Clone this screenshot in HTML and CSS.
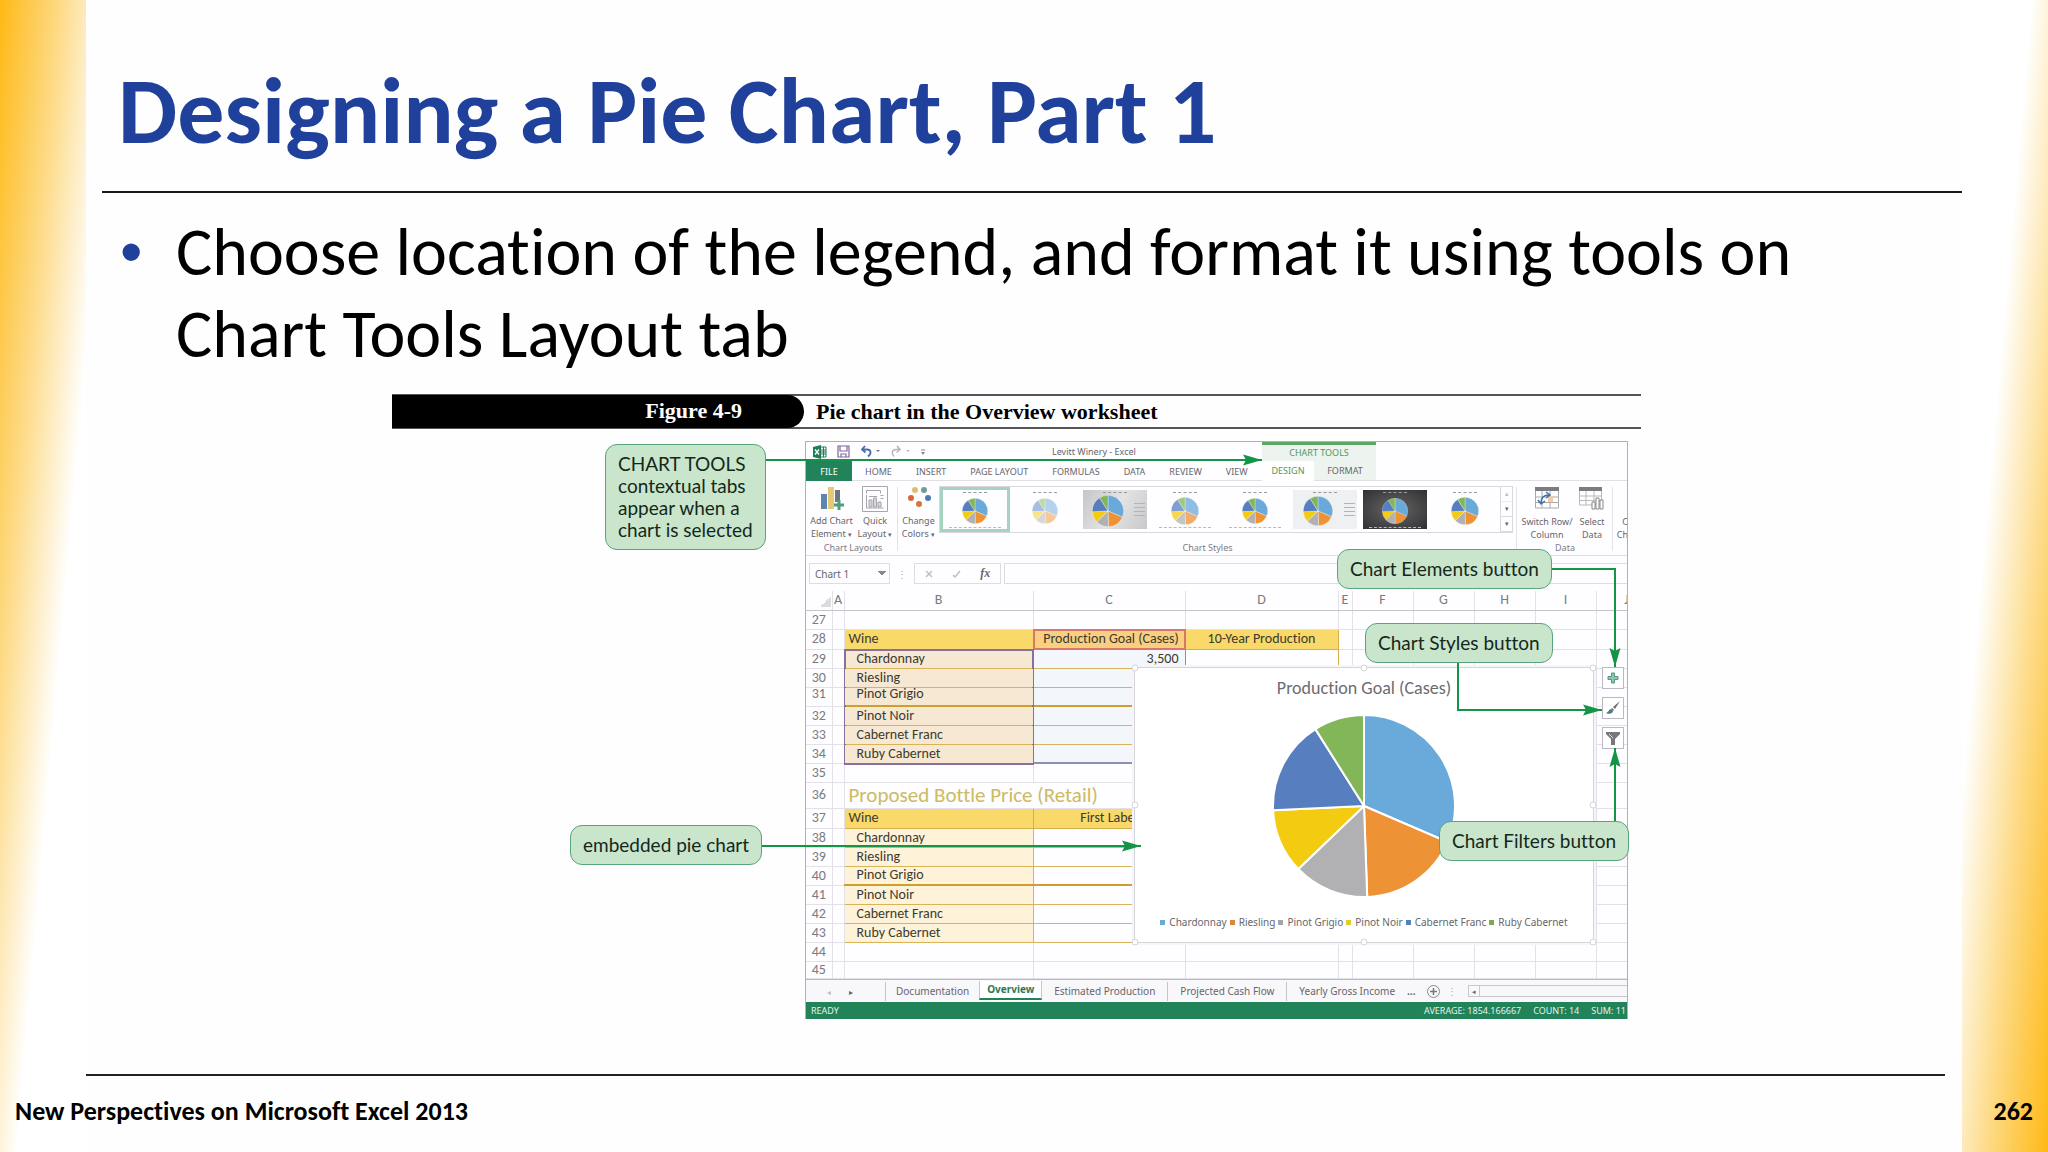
FILE: index.html
```html
<!DOCTYPE html>
<html lang="en">
<head>
    <meta charset="UTF-8">
    <meta name="viewport" content="width=device-width, initial-scale=1.0">
    <title>Designing a Pie Chart, Part 1</title>
    <link rel="stylesheet" href="styles.css">
</head>
<body>

    <!-- Shared pie drawing, used by the chart and the style thumbnails -->
    <svg class="defs" width="0" height="0" aria-hidden="true">
        <symbol id="pie" viewBox="-93 -93 186 186">
            <g stroke="#fff" stroke-width="2" stroke-linejoin="round">
                <path fill="#6aaadb" d="M0 0V-91A91 91 0 0 1 83.6 36Z"/>
                <path fill="#ee9236" d="M0 0L83.6 36A91 91 0 0 1 3.2 90.9Z"/>
                <path fill="#b1b1b3" d="M0 0L3.2 90.9A91 91 0 0 1 -65.7 63Z"/>
                <path fill="#f3cb10" d="M0 0L-65.7 63A91 91 0 0 1 -90.9 4.3Z"/>
                <path fill="#577fbf" d="M0 0L-90.9 4.3A91 91 0 0 1 -48.6 -76.9Z"/>
                <path fill="#83b658" d="M0 0L-48.6 -76.9A91 91 0 0 1 0 -91Z"/>
            </g>
        </symbol>
    </svg>

    <header class="slide-header">
        <h1>Designing a Pie Chart, Part 1</h1>
    </header>

    <main>
        <ul class="points">
            <li>Choose location of the legend, and format it using tools on Chart Tools Layout tab</li>
        </ul>

        <figure>
            <figcaption>
                <span class="figure-number">Figure 4-9</span>
                <span class="figure-title">Pie chart in the Overview worksheet</span>
            </figcaption>

            <div class="figure-body">
                <div class="excel">

                    <!-- Title bar and ribbon tabs -->
                    <div class="top">
                        <div class="top-left">
                            <div class="title-bar">
                                <div class="quick-access">
                                    <svg width="14" height="14" viewBox="0 0 14 14"><path fill="#fff" stroke="#1e7f56" d="M7 2h6v10H7z"/><path stroke="#1e7f56" d="M8 5h5M8 7h5M8 9h5M10.500 2v10"/><path fill="#1e7f56" d="M0 2l8-2v14l-8-2z"/><path stroke="#fff" stroke-width="1.300" d="M2 4.500l4 5M6 4.500l-4 5"/></svg>
                                    <svg width="13" height="13" viewBox="0 0 13 13"><path fill="none" stroke="#82669b" stroke-width="1.200" d="M1 1h11v11H1zM3 1v5h7V1M4 12V9h5v3"/></svg>
                                    <svg width="20" height="13" viewBox="0 0 20 13"><path fill="none" stroke="#4a6da8" stroke-width="1.800" d="M5 1L2 4.500L5.500 7.500M2 4.500h5c4 0 5 4 1 7"/><path fill="#777" d="M16 5h4l-2 2z"/></svg>
                                    <svg width="20" height="13" viewBox="0 0 20 13"><path fill="none" stroke="#b4b4bd" stroke-width="1.500" d="M7 1l3 3.500L6.500 7.500M10 4.500H6c-4 0-5 4-2 7"/><path fill="#bbb" d="M16 5h4l-2 2z"/></svg>
                                    <svg width="6" height="8" viewBox="0 0 6 8"><path stroke="#888" d="M1 2h4"/><path fill="#888" d="M1 4h4l-2 3z"/></svg>
                                </div>
                                <span class="file-name">Levitt Winery - Excel</span>
                            </div>
                            <nav class="tabs">
                                <button class="file">FILE</button>
                                <button>HOME</button>
                                <button>INSERT</button>
                                <button>PAGE LAYOUT</button>
                                <button>FORMULAS</button>
                                <button>DATA</button>
                                <button>REVIEW</button>
                                <button>VIEW</button>
                            </nav>
                        </div>
                        <div class="chart-tools">
                            <span>CHART TOOLS</span>
                            <nav class="tool-tabs">
                                <button class="active">DESIGN</button>
                                <button>FORMAT</button>
                            </nav>
                        </div>
                    </div>

                    <!-- Ribbon -->
                    <div class="ribbon">
                        <div class="group layouts">
                            <div class="group-items">
                                <button>
                                    <svg width="26" height="24" viewBox="0 0 26 24"><path fill="#5b86b4" d="M2 8h6v15H2z"/><path fill="#e6c878" d="M9 1h6v22H9z"/><path fill="#6c7680" d="M16 4h5v12h-5z"/><path stroke="#4f9c7a" stroke-width="3" d="M20 14v10M15 19h10"/></svg>
                                    <span>Add Chart<br>Element <small>▾</small></span>
                                </button>
                                <button>
                                    <svg width="26" height="26" viewBox="0 0 26 26"><g fill="none" stroke="#a5a5ad"><path d="M.5 .5h25v25H.5z"/><path d="M4.500 7.500v-3h14v3M7 10.500h8M4.500 9v13h17M18.500 9.500h3M18.500 12.500h3"/><path fill="#d5d5da" d="M7 14h3v7H7zM11.500 12h3v9h-3zM16 16h3v5h-3z"/></g></svg>
                                    <span>Quick<br>Layout <small>▾</small></span>
                                </button>
                            </div>
                            <div class="group-name">Chart Layouts</div>
                        </div>
                        <div class="group styles">
                            <div class="group-items">
                                <button>
                                    <svg width="24" height="24" viewBox="0 0 24 24"><circle cx="8" cy="4" r="3" fill="#d9c070"/><circle cx="17" cy="4" r="3" fill="#6f9d97"/><circle cx="4" cy="12" r="3" fill="#d5673f"/><circle cx="21" cy="12" r="3" fill="#4a7db5"/><circle cx="12" cy="18" r="3" fill="#d5743b"/></svg>
                                    <span>Change<br>Colors <small>▾</small></span>
                                </button>
                                <div class="gallery">
                                    <button class="thumb selected" aria-label="Style 1"><i></i><svg width="26" height="26"><use href="#pie"/></svg><b></b></button>
                                    <button class="thumb faded" aria-label="Style 2"><i></i><svg width="26" height="26"><use href="#pie"/></svg></button>
                                    <button class="thumb grey" aria-label="Style 3"><i></i><svg width="32" height="32"><use href="#pie"/></svg><em></em></button>
                                    <button class="thumb soft" aria-label="Style 4"><i></i><svg width="28" height="28"><use href="#pie"/></svg><b></b></button>
                                    <button class="thumb" aria-label="Style 5"><i></i><svg width="26" height="26"><use href="#pie"/></svg><b></b></button>
                                    <button class="thumb light" aria-label="Style 6"><i></i><svg width="30" height="30"><use href="#pie"/></svg><em></em></button>
                                    <button class="thumb dark" aria-label="Style 7"><i></i><svg width="26" height="26"><use href="#pie"/></svg><b></b></button>
                                    <button class="thumb" aria-label="Style 8"><i></i><svg width="28" height="28"><use href="#pie"/></svg></button>
                                    <div class="gallery-scroll">
                                        <button class="off">▴</button>
                                        <button>▾</button>
                                        <button>▾</button>
                                    </div>
                                </div>
                            </div>
                            <div class="group-name">Chart Styles</div>
                        </div>
                        <div class="group data">
                            <div class="group-items">
                                <button>
                                    <svg width="24" height="24" viewBox="0 0 24 24"><path fill="#7b7b80" d="M0 1h24v4H0z"/><path fill="none" stroke="#aaa" d="M.5 5v17h23V5M.5 11h23M.5 16.500h23M7 5v17M15 5v17"/><path fill="#f7c9a4" d="M13 10h5v6h-5z"/><path fill="none" stroke="#3d71a8" stroke-width="1.500" d="M6 17c0-5 3-8 8-8M11 6l4 3-4 3M3 14l3 4 4-3"/></svg>
                                    <span>Switch Row/<br>Column</span>
                                </button>
                                <button>
                                    <svg width="26" height="24" viewBox="0 0 26 24"><path fill="#7b7b80" d="M0 1h23v4H0z"/><path fill="none" stroke="#bbb" d="M.5 5v14h22V5M.5 10h22M.5 14.500h22M7 5v14M15 5v14"/><path fill="#fff" stroke="#888" d="M13 16h3v7h-3zM17 12h3v11h-3zM21 14h3v9h-3z"/></svg>
                                    <span>Select<br>Data</span>
                                </button>
                            </div>
                            <div class="group-name">Data</div>
                        </div>
                        <div class="group type">
                            <div class="group-items">
                                <button><span>C<br>Ch</span></button>
                            </div>
                        </div>
                    </div>

                    <!-- Formula bar -->
                    <div class="formula-bar">
                        <select aria-label="Name box"><option>Chart 1</option></select>
                        <span class="dots">⋮</span>
                        <div class="formula-buttons">
                            <button aria-label="Cancel"><svg width="8" height="8" viewBox="0 0 8 8"><path stroke="#bbb" stroke-width="1.300" d="M1 1l6 6M7 1L1 7"/></svg></button>
                            <button aria-label="Enter"><svg width="9" height="8" viewBox="0 0 9 8"><path fill="none" stroke="#bbb" stroke-width="1.300" d="M1 5l2 2 5-6"/></svg></button>
                            <button class="fx">fx</button>
                        </div>
                        <input type="text" aria-label="Formula">
                    </div>

                    <!-- Worksheet with the embedded chart -->
                    <div class="sheet">
                        <table>
                            <colgroup>
                                <col class="num"><col class="a"><col class="b"><col class="c"><col class="d"><col class="e"><col><col><col><col><col>
                            </colgroup>
                            <thead>
                                <tr><th class="corner"></th><th>A</th><th>B</th><th>C</th><th>D</th><th>E</th><th>F</th><th>G</th><th>H</th><th>I</th><th>J</th></tr>
                            </thead>
                            <tbody>
                                <tr><th>27</th><td></td><td></td><td></td><td></td><td></td><td></td><td></td><td></td><td></td><td></td></tr>
                                <tr class="head"><th>28</th><td></td><td class="gold">Wine</td><td class="gold series"><span class="range"></span>Production Goal (Cases)</td><td class="gold center">10-Year Production</td><td></td><td></td><td></td><td></td><td></td><td></td></tr>
                                <tr><th>29</th><td></td><td class="name picked first"><span class="range"></span>Chardonnay</td><td class="value picked">3,500</td><td class="edge"></td><td></td><td></td><td></td><td></td><td></td><td></td></tr>
                                <tr><th>30</th><td></td><td class="name picked">Riesling</td><td class="value picked"></td><td colspan="6"></td><td></td></tr>
                                <tr class="thick"><th class="raised">31</th><td></td><td class="name picked raised">Pinot Grigio</td><td class="value picked"></td><td colspan="6"></td><td></td></tr>
                                <tr><th>32</th><td></td><td class="name picked">Pinot Noir</td><td class="value picked"></td><td colspan="6"></td><td></td></tr>
                                <tr><th>33</th><td></td><td class="name picked">Cabernet Franc</td><td class="value picked"></td><td colspan="6"></td><td></td></tr>
                                <tr><th>34</th><td></td><td class="name picked">Ruby Cabernet</td><td class="value picked last"></td><td colspan="6"></td><td></td></tr>
                                <tr><th>35</th><td></td><td></td><td></td><td colspan="6"></td><td></td></tr>
                                <tr class="section"><th>36</th><td></td><td class="heading" colspan="2">Proposed Bottle Price (Retail)</td><td colspan="6"></td><td></td></tr>
                                <tr class="head"><th>37</th><td></td><td class="gold">Wine</td><td class="gold center">First Label</td><td colspan="6"></td><td></td></tr>
                                <tr><th>38</th><td></td><td class="name">Chardonnay</td><td class="value"></td><td colspan="6"></td><td></td></tr>
                                <tr><th>39</th><td></td><td class="name">Riesling</td><td class="value"></td><td colspan="6"></td><td></td></tr>
                                <tr class="thick"><th>40</th><td></td><td class="name">Pinot Grigio</td><td class="value"></td><td colspan="6"></td><td></td></tr>
                                <tr><th>41</th><td></td><td class="name">Pinot Noir</td><td class="value"></td><td colspan="6"></td><td></td></tr>
                                <tr><th>42</th><td></td><td class="name">Cabernet Franc</td><td class="value"></td><td colspan="6"></td><td></td></tr>
                                <tr><th>43</th><td></td><td class="name">Ruby Cabernet</td><td class="value"></td><td colspan="6"></td><td></td></tr>
                                <tr><th>44</th><td></td><td></td><td></td><td></td><td></td><td></td><td></td><td></td><td></td><td></td></tr>
                                <tr class="short"><th>45</th><td></td><td></td><td></td><td></td><td></td><td></td><td></td><td></td><td></td><td></td></tr>
                            </tbody>
                        </table>

                        <div class="chart">
                            <h3>Production Goal (Cases)</h3>
                            <svg width="186" height="186"><use href="#pie"/></svg>
                            <ul class="legend">
                                <li class="blue">Chardonnay</li>
                                <li class="orange">Riesling</li>
                                <li class="silver">Pinot Grigio</li>
                                <li class="yellow">Pinot Noir</li>
                                <li class="navy">Cabernet Franc</li>
                                <li class="green">Ruby Cabernet</li>
                            </ul>
                            <svg class="handles" width="100%" height="100%" fill="#fff" stroke="#d4d4da"><circle cx="0" cy="0" r="3"/><circle cx="50%" cy="0" r="3"/><circle cx="100%" cy="0" r="3"/><circle cx="0" cy="50%" r="3"/><circle cx="100%" cy="50%" r="3"/><circle cx="0" cy="100%" r="3"/><circle cx="50%" cy="100%" r="3"/><circle cx="100%" cy="100%" r="3"/></svg>
                        </div>

                        <div class="chart-buttons">
                            <button aria-label="Chart Elements"><svg width="12" height="12" viewBox="0 0 12 12"><path fill="#8fc4b0" stroke="#4f9a80" d="M4.500 1h3v3.500H11v3H7.500V11h-3V7.500H1v-3h3.500z"/></svg></button>
                            <button aria-label="Chart Styles"><svg width="15" height="14" viewBox="0 0 15 14"><path fill="#6d6d75" d="M14 0L7 6l2 2zM6 7l2 2-1 1-2-2z"/><path fill="#4d7a86" d="M5 8c-2 0-2 3-5 4 4 2 7 0 7-2z"/></svg></button>
                            <button aria-label="Chart Filters"><svg width="14" height="13" viewBox="0 0 14 13"><path fill="#77777d" d="M0 0h14v2L9 7v6H5V7L0 2z"/><path stroke="#ddd" d="M3 2l4 4"/></svg></button>
                        </div>
                    </div>

                    <!-- Sheet tabs -->
                    <div class="sheet-tabs">
                        <button class="arrow off" aria-label="Previous sheet">◂</button>
                        <button class="arrow" aria-label="Next sheet">▸</button>
                        <button class="tab first">Documentation</button>
                        <button class="tab current">Overview</button>
                        <button class="tab">Estimated Production</button>
                        <button class="tab line">Projected Cash Flow</button>
                        <button class="tab line">Yearly Gross Income</button>
                        <span class="more">...</span>
                        <button class="add" aria-label="New sheet"><svg width="13" height="13" viewBox="0 0 13 13"><circle cx="6.500" cy="6.500" r="6" fill="none" stroke="#888"/><path stroke="#777" stroke-width="1.500" d="M6.500 3v7M3 6.500h7"/></svg></button>
                        <span class="dots">⋮</span>
                        <div class="scroll"><button aria-label="Scroll left">◂</button></div>
                    </div>

                    <div class="status">
                        <span class="ready">READY</span>
                        <span>AVERAGE: 1854.166667</span>
                        <span>COUNT: 14</span>
                        <span>SUM: 11</span>
                    </div>
                </div>

                <!-- Connector lines between the callouts and the window -->
                <svg class="connectors" width="1250" height="580">
                    <defs>
                        <marker id="arrow" markerUnits="userSpaceOnUse" markerWidth="20" markerHeight="12" refX="19" refY="6" orient="auto">
                            <path fill="#149447" d="M0 0.500L19 6L0 11.500L3 6Z"/>
                        </marker>
                    </defs>
                    <g fill="none" stroke="#149447" stroke-width="2">
                        <path marker-end="url(#arrow)" d="M370 19H870"/>
                        <path marker-end="url(#arrow)" d="M1156 128H1223V226"/>
                        <path marker-end="url(#arrow)" d="M1066 220V269H1210"/>
                        <path marker-end="url(#arrow)" d="M1223 384V307"/>
                        <path marker-end="url(#arrow)" d="M366 405H749"/>
                    </g>
                </svg>
                <p class="callout tools-note">CHART TOOLS<br>contextual tabs<br>appear when a<br>chart is selected</p>
                <p class="callout pie-note">embedded pie chart</p>
                <p class="callout elements-note">Chart Elements button</p>
                <p class="callout styles-note">Chart Styles button</p>
                <p class="callout filters-note">Chart Filters button</p>
            </div>
        </figure>
    </main>

    <footer>
        <span>New Perspectives on Microsoft Excel 2013</span>
        <span>262</span>
    </footer>

</body>
</html>
```
FILE: styles.css
```css
* {
    box-sizing: border-box;
}

/* Slide with a gold fade down each side */
body {
    margin: 0;
    min-height: 100vh;
    display: flex;
    flex-direction: column;
    font-family: Calibri, Carlito, 'Lato', sans-serif;
    font-variant-ligatures: none;
    color: #000;
    background:
        linear-gradient(95deg, #ffb914, #fddc8c 34%, #fff 63%) left / 86px 100% no-repeat,
        linear-gradient(275deg, #ffb914, #fddc8c 34%, #fff 63%) right / 86px 100% no-repeat,
        #fefefe;
}

button, select, input {
    font: inherit;
    color: inherit;
    background: none;
    border: none;
    padding: 0;
    margin: 0;
}

.defs {
    position: absolute;
}

/* Slide title */
.slide-header {
    margin: 0 86px 0 102px;
    padding: 57px 18px 0 16px;
    height: 193px;
    border-bottom: 2px solid #1a1a1a;
}

h1 {
    margin: 0;
    font-size: 94px;
    line-height: 108px;
    font-weight: bold;
    color: #1f409b;
}

main {
    flex: 1;
}

/* Bullet list */
.points {
    margin: 0 200px 0 120px;
    padding: 18px 0 0;
    list-style: none;
    font-size: 68px;
    line-height: 82px;
}

.points li {
    display: flex;
}

.points li::before {
    content: "•";
    flex: 0 0 56px;
    font-family: 'Liberation Sans', sans-serif;
    font-size: 64px;
    color: #1f409b;
}

/* Figure */
figure {
    margin: 19px 407px 0 392px;
}

figcaption {
    display: flex;
    height: 35px;
    border-top: 2px solid #55555a;
    border-bottom: 2px solid #55555a;
    font-family: 'Liberation Serif', serif;
    font-size: 22px;
    line-height: 32px;
    font-weight: bold;
}

.figure-number {
    width: 412px;
    padding-right: 62px;
    margin: -1px 0;
    background: #000;
    color: #fff;
    text-align: right;
    border-radius: 0 17px 17px 0;
}

.figure-title {
    padding-left: 12px;
}

.figure-body {
    position: relative;
    margin-top: 12px;
    padding: 0 13px 0 413px;
}

/* Excel window */
.excel {
    border: 1px solid #b0b0b8;
    border-bottom: none;
    overflow: hidden;
    background: #fefdff;
    font-family: 'Noto Sans', sans-serif;
    font-size: 10px;
    color: #66666c;
}

.top {
    display: flex;
    height: 39px;
    border-bottom: 1px solid #e0e0e4;
    font-size: 9px;
    white-space: nowrap;
}

.top-left {
    flex: 0 0 456px;
}

.title-bar {
    display: flex;
    align-items: center;
    height: 19px;
}

.quick-access {
    display: flex;
    align-items: center;
    gap: 10px;
    width: 246px;
    padding-left: 7px;
}

.tabs {
    display: flex;
    gap: 24px;
    height: 20px;
}

.tabs .file {
    width: 46px;
    margin-right: -11px;
    background: #22825a;
    color: #fff;
}

.chart-tools {
    width: 114px;
    background: #edf3ef;
    border-top: 3px solid #5ba565;
    color: #4b9a5c;
    text-align: center;
    line-height: 16px;
}

.chart-tools span {
    display: block;
}

.tool-tabs {
    display: flex;
    height: 20px;
}

.tool-tabs button {
    flex: 1 0 auto;
    color: #66666c;
}

.tool-tabs .active {
    flex: 0 0 52px;
    background: #fff;
    color: #4b9a5c;
}

/* Ribbon */
.ribbon {
    display: flex;
    height: 75px;
    border-bottom: 1px solid #dcdce2;
    font-size: 9px;
    line-height: 13px;
}

.group {
    flex: none;
    display: flex;
    flex-direction: column;
    padding-top: 5px;
    position: relative;
    white-space: nowrap;
}

.group::after {
    content: "";
    position: absolute;
    right: 0;
    top: 6px;
    height: 64px;
    border-right: 1px solid #e4e4e8;
}

.group-items {
    display: flex;
    height: 55px;
}

.group-items > button {
    flex: none;
    display: flex;
    flex-direction: column;
    align-items: center;
    justify-content: space-between;
}

.group small {
    font-size: 7px;
}

.group-name {
    text-align: center;
    color: #7c7c84;
}

.layouts {
    width: 92px;
    padding-left: 2px;
}

.layouts button {
    width: 47px;
}

.layouts button + button {
    width: 40px;
}

.styles {
    width: 619px;
}

.styles .group-items > button {
    width: 41px;
}

.gallery {
    display: flex;
    width: 574px;
    height: 47px;
    border: 1px solid #d8d8de;
}

.thumb {
    position: relative;
    display: flex;
    align-items: center;
    justify-content: center;
    flex: 0 0 64px;
    height: 39px;
    margin: 3px;
    padding-top: 3px;
}

/* Faint title and legend strips */
.thumb i, .thumb b, .thumb em {
    position: absolute;
    top: 2px;
    left: 20px;
    right: 20px;
    border-top: 1px dashed #999;
}

.thumb b {
    top: auto;
    bottom: 1px;
    left: 6px;
    right: 6px;
    border-top: 1px dashed #bbb;
}

.thumb em {
    top: 13px;
    left: 51px;
    right: 2px;
    height: 16px;
    border: none;
    background: repeating-linear-gradient(#b4b4b8 0 1px, transparent 1px 4px);
}

.thumb.selected {
    outline: 3px solid #a5d3c0;
}

.thumb.faded svg {
    opacity: 0.5;
}

.thumb.soft svg {
    opacity: 0.75;
}

.thumb.grey {
    background: linear-gradient(120deg, #c5c5c7, #e4e4e5 50%, #c8c8ca);
}

.thumb.grey svg, .thumb.light svg {
    margin-right: 14px;
}

.thumb.light {
    background: #eff0f1;
}

.thumb.dark {
    background: radial-gradient(#666, #303033);
}

.gallery-scroll {
    display: flex;
    flex-direction: column;
    flex: 1;
    border-left: 1px solid #d8d8de;
}

.gallery-scroll button {
    flex: 1;
    font-size: 7px;
    line-height: 14px;
    border-bottom: 1px solid #d8d8de;
}

.off {
    opacity: 0.4;
}

.data {
    width: 96px;
}

.data button {
    width: 60px;
}

.data button + button {
    width: 30px;
}

.type .group-items > button {
    align-items: flex-end;
    justify-content: flex-end;
    width: 15px;
    text-align: right;
}

/* Formula bar */
.formula-bar {
    display: flex;
    align-items: center;
    height: 35px;
    padding: 0 0 0 3px;
}

.formula-bar select {
    appearance: none;
    width: 81px;
    height: 21px;
    padding-left: 5px;
    border: 1px solid #dcdce2;
    background: linear-gradient(45deg, transparent 50%, #888 50%) 68px 7px / 4px 4px no-repeat,
        linear-gradient(-45deg, transparent 50%, #888 50%) 72px 7px / 4px 4px no-repeat;
}

.dots {
    width: 24px;
    text-align: center;
    color: #aaa;
}

.formula-buttons {
    display: flex;
    justify-content: space-around;
    align-items: center;
    width: 87px;
    height: 21px;
    border: 1px solid #dcdce2;
}

.fx {
    font-family: 'Liberation Serif', serif;
    font-size: 12px;
    font-style: italic;
    font-weight: bold;
}

.formula-bar input {
    flex: 1;
    height: 21px;
    margin-left: 3px;
    border: 1px solid #dcdce2;
    border-right: none;
}

/* Worksheet grid */
.sheet {
    position: relative;
    height: 388px;
    overflow: hidden;
}

table {
    width: 851px;
    table-layout: fixed;
    border-collapse: collapse;
    font-family: Calibri, Carlito, 'Lato', sans-serif;
    font-size: 14px;
    line-height: 16px;
    color: #3c3a30;
}

col { width: 61px; }
col.num { width: 26px; }
col.a { width: 12px; }
col.b { width: 189px; }
col.c { width: 152px; }
col.d { width: 153px; }
col.e { width: 14px; }

tr { height: 19px; }
tr.head { height: 20px; }
tr.section { height: 26px; }
tr.short { height: 17px; }

th, td {
    position: relative;
    padding: 0;
    border: 1px solid #e3e1e8;
    white-space: nowrap;
}

th {
    font-weight: normal;
    color: #7a7a80;
    border-left: none;
}

thead th {
    height: 19px;
    border-top: none;
    border-bottom-color: #c4c4ca;
    font-size: 14px;
}

.corner {
    background: linear-gradient(135deg, transparent 50%, #dcdce0 50%) 14px 5px / 11px 11px no-repeat;
}

.gold {
    padding-left: 4px;
    background: #f8d969;
    border-color: #d5b04a;
}

.gold.center {
    padding-left: 0;
    text-align: center;
}

.gold.series {
    background: #f8d080;
    text-align: center;
}

.name {
    padding-left: 12px;
    background: #fef2d8;
    border-color: #d9b35a;
}

.name.picked {
    background: #f6e8d3;
}

.raised {
    line-height: 12px;
    vertical-align: top;
}

.value {
    padding-right: 6px;
    text-align: right;
    border-color: #d9b35a;
}

.value.picked {
    background: #f3f6fa;
    border-right-color: #8090c8;
}

.value.last {
    border-bottom: 2px solid #8d8fb0;
}

.edge {
    border-right-color: #d5b04a;
}

.thick .name, .thick .value {
    border-bottom: 2px solid #cf9f2c;
}

.heading {
    padding-left: 4px;
    font-size: 21px;
    line-height: 24px;
    color: #cbbb62;
}

/* Range outlines drawn around the chart's source cells */
.range {
    position: absolute;
    inset: -1px;
    border: 2px solid #d9756a;
}

.first .range {
    bottom: auto;
    height: 116px;
    border-color: #86709c;
}

/* Embedded chart */
.chart {
    position: absolute;
    left: 328px;
    top: 76px;
    width: 460px;
    height: 276px;
    background: #fff;
    border: 1px solid #d4d4da;
    box-shadow: 0 0 0 2px #f6f6f8;
    text-align: center;
}

.chart h3 {
    margin: 10px 0 14px;
    font-family: Calibri, Carlito, 'Lato', sans-serif;
    font-size: 18px;
    line-height: 21px;
    font-weight: normal;
    color: #6c6c70;
}

.chart svg {
    display: block;
    margin: 0 auto;
}

.chart .handles {
    position: absolute;
    inset: 0;
    overflow: visible;
}

.legend {
    display: flex;
    justify-content: center;
    gap: 3px;
    margin: 15px 0 0;
    padding: 0;
    list-style: none;
    font-size: 10px;
    line-height: 16px;
}

.legend li::before {
    content: "";
    display: inline-block;
    width: 5px;
    height: 5px;
    margin: 0 4px 1px 0;
    background: currentColor;
}

.blue::before { color: #6aaadb; }
.orange::before { color: #dd8638; }
.silver::before { color: #a5a5a8; }
.yellow::before { color: #e3cb2b; }
.navy::before { color: #577fbf; }
.green::before { color: #83a658; }

.chart-buttons {
    position: absolute;
    left: 796px;
    top: 76px;
    display: flex;
    flex-direction: column;
    gap: 8px;
}

.chart-buttons button {
    display: flex;
    align-items: center;
    justify-content: center;
    width: 22px;
    height: 22px;
    background: #fff;
    border: 1px solid #bdb9c4;
}

/* Sheet tabs */
.sheet-tabs {
    display: flex;
    align-items: center;
    height: 23px;
    border-top: 1px solid #b8b8c0;
    background: #f8f7fa;
    white-space: nowrap;
}

.arrow {
    width: 22px;
    margin-left: 12px;
    font-size: 8px;
}

.arrow + .arrow {
    margin: 0 23px 0 0;
}

.tab {
    height: 19px;
    padding: 0 12px;
}

.tab.first, .tab.line {
    border-left: 1px solid #c4c4ca;
}

.tab.first {
    padding: 0 10px;
}

.tab.current {
    margin-top: -2px;
    padding: 0 7px;
    background: #fff;
    border: 1px solid #c4c4ca;
    border-top: none;
    border-bottom: 2px solid #22825a;
    color: #2a7856;
    font-weight: bold;
}

.more {
    width: 20px;
    font-weight: bold;
}

.add {
    height: 13px;
}

.scroll {
    flex: 1;
    height: 12px;
    border: 1px solid #c8c8ce;
    border-right: none;
    margin-left: 4px;
}

.scroll button {
    display: block;
    width: 11px;
    height: 10px;
    border-right: 1px solid #c8c8ce;
    font-size: 7px;
    line-height: 9px;
}

.status {
    display: flex;
    gap: 12px;
    height: 17px;
    padding: 0 1px 0 5px;
    background: #22825a;
    color: #e6f3ec;
    font-size: 9px;
    line-height: 17px;
    white-space: nowrap;
}

.ready {
    flex: 1;
}

/* Callouts */
.connectors {
    position: absolute;
    left: 0;
    top: 0;
}

.callout {
    position: absolute;
    margin: 0;
    padding: 8px 12px;
    background: #c9e5cc;
    border: 1px solid #58a47c;
    border-radius: 12px;
    font-family: 'Lato', sans-serif;
    font-size: 19px;
    line-height: 22px;
    color: #14281a;
    white-space: nowrap;
}

.tools-note { left: 213px; top: 3px; }
.pie-note { left: 178px; top: 384px; }
.elements-note { left: 945px; top: 108px; }
.styles-note { left: 973px; top: 182px; }
.filters-note { left: 1047px; top: 380px; }

/* Footer */
footer {
    display: flex;
    justify-content: space-between;
    padding: 22px 15px 26px;
    font-size: 26px;
    line-height: 30px;
    font-weight: bold;
    background: linear-gradient(#222, #222) 86px 0 / calc(100% - 189px) 2px no-repeat;
}
```
